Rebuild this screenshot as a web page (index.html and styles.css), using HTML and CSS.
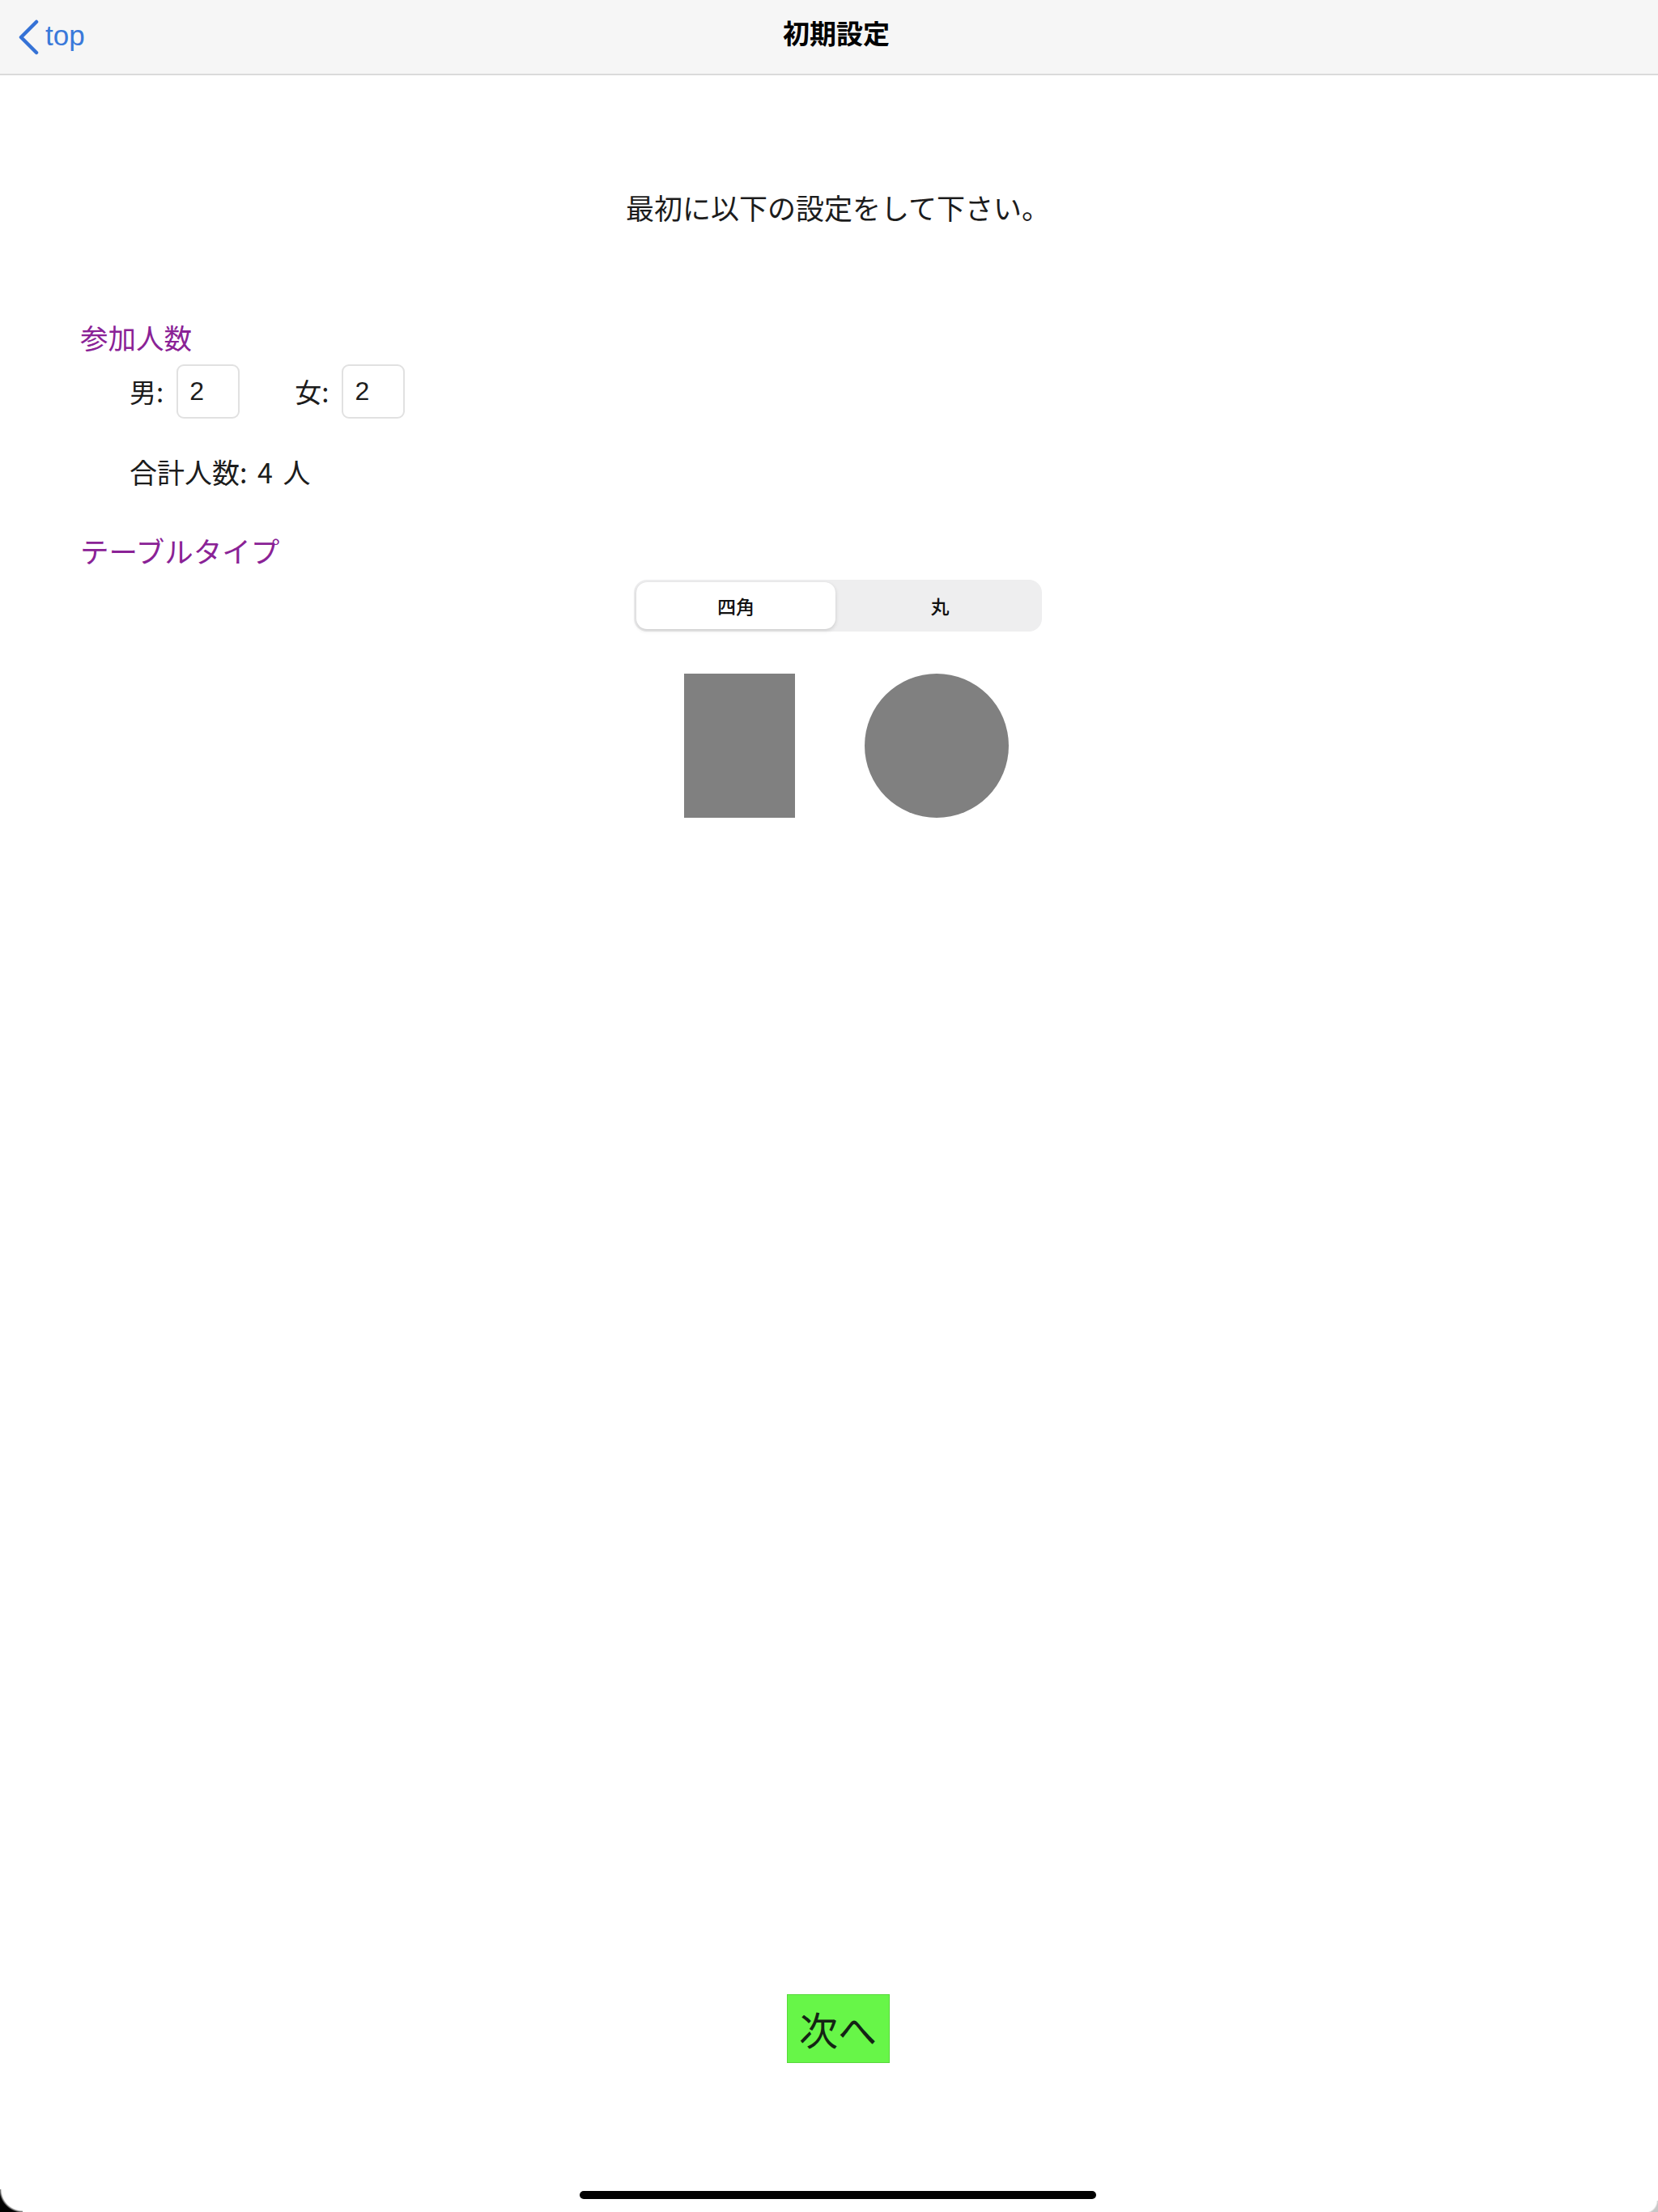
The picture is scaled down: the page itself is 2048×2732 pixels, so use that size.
FILE: index.html
```html
<!DOCTYPE html>
<html lang="ja">
<head>
<meta charset="utf-8">
<title>初期設定</title>
<link rel="stylesheet" href="styles.css">
</head>
<body>
<div class="screen">
  <header class="nav">
    <a class="back">
      <svg class="chevron" width="28" height="44" viewBox="0 0 28 44" aria-hidden="true">
        <path d="M24 3 L5 22 L24 41" fill="none" stroke="currentColor" stroke-width="4.5" stroke-linecap="round" stroke-linejoin="round"/>
      </svg>
      <span class="back-label">top</span>
    </a>
    <h1 class="nav-title">初期設定</h1>
    <div class="nav-spacer"></div>
  </header>

  <main class="content">
    <p class="intro">最初に以下の設定をして下さい。</p>

    <section class="group">
      <h2 class="group-title">参加人数</h2>
      <div class="count-row">
        <div class="field">
          <span class="field-label">男:</span>
          <span class="field-box">2</span>
        </div>
        <div class="field field-second">
          <span class="field-label">女:</span>
          <span class="field-box">2</span>
        </div>
      </div>
      <p class="total">合計人数: 4 人</p>
    </section>

    <section class="group">
      <h2 class="group-title group-title-table">テーブルタイプ</h2>
      <div class="segment-wrap">
        <div class="segmented">
          <span class="segment segment-active">四角</span>
          <span class="segment">丸</span>
        </div>
      </div>
      <div class="shapes">
        <div class="shape-rect"></div>
        <div class="shape-circle"></div>
      </div>
    </section>
  </main>

  <footer class="bottom">
    <div class="next-wrap">
      <button class="next-btn">次へ</button>
    </div>
    <div class="home-indicator"></div>
  </footer>
</div>
</body>
</html>
```

FILE: styles.css
```css
* {
  box-sizing: border-box;
}

html, body {
  margin: 0;
  padding: 0;
  background: #ffffff;
}

.screen {
  position: relative;
  width: 2048px;
  height: 2732px;
  overflow: hidden;
  display: flex;
  flex-direction: column;
  background: #ffffff;
  font-family: "Noto Sans CJK JP", "Noto Sans", sans-serif;
  color: #1a1a1a;
}

.screen::before {
  content: "";
  position: absolute;
  left: 0;
  bottom: 0;
  width: 28px;
  height: 28px;
  background: radial-gradient(circle at 100% 0, rgba(0,0,0,0) 26px, #000 29px);
}

.screen::after {
  content: "";
  position: absolute;
  right: 0;
  bottom: 0;
  width: 16px;
  height: 14px;
  background: radial-gradient(circle at 0 0, rgba(0,0,0,0) 14px, #c8c8c8 16px);
}

/* Navigation bar */
.nav {
  height: 93px;
  flex: 0 0 93px;
  display: grid;
  grid-template-columns: 1fr auto 1fr;
  align-items: center;
  background: #f6f6f6;
  border-bottom: 2px solid #dadada;
}

.back {
  display: flex;
  align-items: center;
  padding-left: 21px;
  color: #3572d6;
}

.chevron {
  display: block;
}

.back-label {
  margin-left: 7px;
  font-family: "Liberation Sans", Arial, sans-serif;
  font-size: 35px;
  line-height: 1;
  color: #3a79da;
  padding-bottom: 4px;
}

.nav-title {
  margin: 0;
  padding-left: 18px;
  padding-bottom: 10px;
  font-size: 33px;
  font-weight: 600;
  line-height: 1;
  color: #000;
}

/* Content */
.content {
  flex: 1 1 auto;
  display: flex;
  flex-direction: column;
}

.intro {
  margin: 145px 0 0 0;
  padding-left: 22px;
  text-align: center;
  font-size: 35px;
  line-height: 1;
  color: #1c1c1c;
}

.group {
  display: flex;
  flex-direction: column;
}

.group-title {
  margin: 126px 0 0 99px;
  font-size: 34.5px;
  font-weight: 400;
  line-height: 1;
  color: #8a2296;
}

.group-title-table {
  margin-top: 62px;
  font-size: 35.5px;
}

.count-row {
  margin-top: 16px;
  padding-left: 160px;
  display: flex;
  align-items: center;
}

.field {
  display: flex;
  align-items: center;
}

.field-second {
  margin-left: 68px;
}

.field-label {
  font-size: 33px;
  line-height: 1;
  color: #1c1c1c;
}

.field-box {
  margin-left: 16px;
  width: 78px;
  height: 67px;
  display: flex;
  align-items: center;
  padding-left: 14px;
  border: 2px solid #e1e1e1;
  border-radius: 9px;
  background: #fff;
  font-family: "Liberation Sans", Arial, sans-serif;
  font-size: 32px;
  line-height: 1;
  color: #1c1c1c;
}

.total {
  margin: 49px 0 0 160px;
  font-size: 34px;
  word-spacing: 5px;
  line-height: 1;
  color: #1c1c1c;
}

/* Segmented control */
.segment-wrap {
  margin-top: 19px;
  padding-left: 22px;
  display: flex;
  justify-content: center;
}

.segmented {
  width: 504px;
  height: 64px;
  padding: 3px;
  display: flex;
  background: #eeeeef;
  border-radius: 16px;
}

.segment {
  flex: 1 1 0;
  display: flex;
  align-items: center;
  justify-content: center;
  font-size: 23px;
  font-weight: 500;
  line-height: 1;
  color: #111;
  border-radius: 13px;
}

.segment-active {
  margin-right: 6px;
  background: #ffffff;
  box-shadow: 0 2px 5px rgba(0, 0, 0, 0.14), 0 0 1px rgba(0, 0, 0, 0.08);
}

/* Shapes */
.shapes {
  margin-top: 52px;
  padding-left: 42px;
  display: flex;
  justify-content: center;
  align-items: flex-start;
  gap: 86px;
}

.shape-rect {
  width: 137px;
  height: 178px;
  background: #808080;
}

.shape-circle {
  width: 178px;
  height: 178px;
  border-radius: 50%;
  background: #808080;
}

/* Bottom */
.bottom {
  flex: 0 0 auto;
  display: flex;
  flex-direction: column;
  align-items: center;
}

.next-wrap {
  width: 100%;
  padding-left: 22px;
  display: flex;
  justify-content: center;
}

.next-btn {
  width: 127px;
  height: 85px;
  margin: 0;
  padding: 0 0 2px 0;
  border: 1px solid #58d83c;
  background: #67f648;
  font-family: "Noto Sans CJK JP", sans-serif;
  font-size: 48px;
  line-height: 1;
  color: #142414;
}

.home-indicator {
  margin-top: 158px;
  margin-bottom: 16px;
  margin-left: 22px;
  width: 638px;
  height: 10px;
  border-radius: 5px;
  background: #000;
}
```
